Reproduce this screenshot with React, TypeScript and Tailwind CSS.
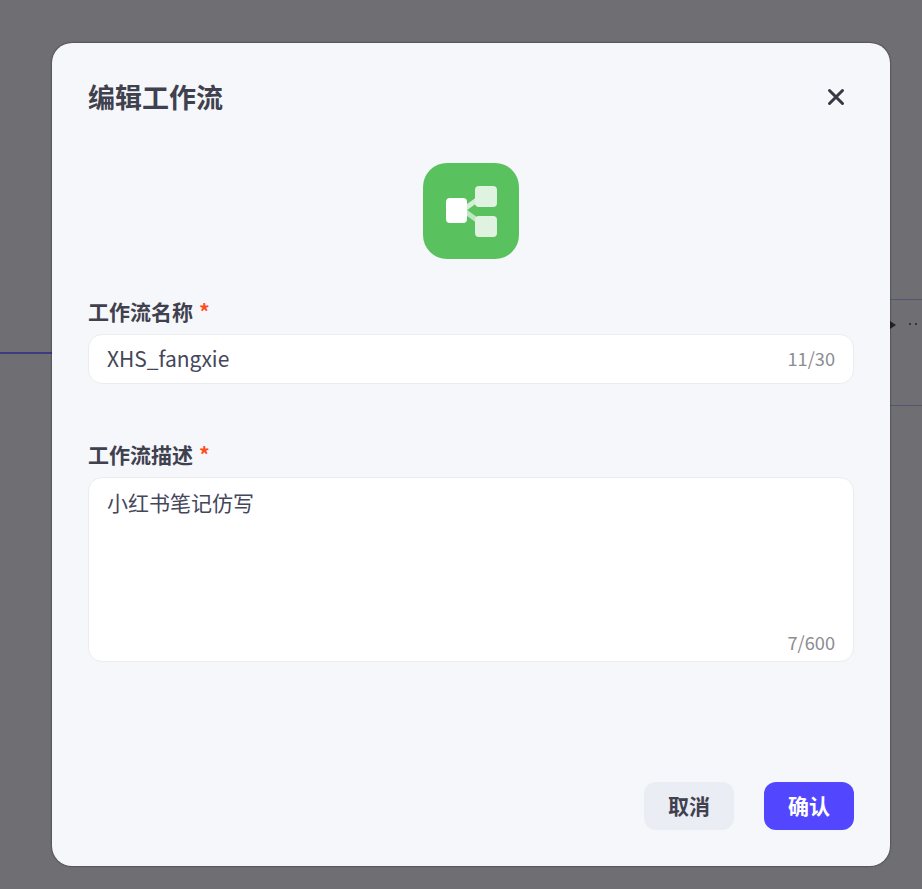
const fontStack = { fontFamily: '"Noto Sans CJK SC", "Noto Sans", sans-serif' };

function WorkflowIcon() {
  return (
    <div className="flex h-24 w-24 items-center justify-center rounded-[24px] bg-[#5ac15f]">
      <svg width="52" height="52" viewBox="0 0 52 52" fill="none">
        <path d="M18 25 L36 12" stroke="#e0f3e1" strokeOpacity="0.9" strokeWidth="5" />
        <path d="M18 25 L36 38" stroke="#bfe6c1" strokeWidth="5" />
        <rect x="30" y="1" width="22" height="21" rx="4" fill="#e0f3e1" />
        <rect x="30" y="31" width="22" height="21" rx="4" fill="#e0f3e1" />
        <rect x="1" y="13" width="21" height="25" rx="4" fill="#ffffff" />
      </svg>
    </div>
  );
}

function FieldLabel({ text }: { text: string }) {
  return (
    <div className="flex h-7 items-center gap-[6px] text-[21px] leading-7 font-semibold text-[#3f414e]">
      <span>{text}</span>
      <span className="text-[#ff4d1f]">*</span>
    </div>
  );
}

export default function App() {
  return (
    <div className="relative h-[889px] w-[922px] overflow-hidden bg-[#6e6e73]" style={fontStack}>
      {/* canvas behind the dialog */}
      <div className="absolute top-[352px] left-0 h-[2px] w-[60px] bg-[#3b3b80]" />
      <div className="absolute top-[299px] left-[880px] h-[107px] w-[60px] border border-[#55556f]" />
      <div className="absolute top-[321px] left-[890px] h-0 w-0 border-y-[4px] border-l-[6px] border-y-transparent border-l-[#222228]" />
      <div className="absolute top-[323px] left-[909px] flex gap-[4px]">
        <span className="h-[2px] w-[2px] rounded-full bg-[#222228]" />
        <span className="h-[2px] w-[2px] rounded-full bg-[#222228]" />
      </div>

      <div className="absolute top-[43px] left-[52px] flex h-[823px] w-[838px] flex-col rounded-[20px] bg-[#f6f7fb] px-9 shadow-[0_0_2px_rgba(0,0,0,0.7)]">
        <div className="flex h-[110px] items-center justify-between pb-[2px]">
          <h2 className="text-[27px] leading-9 font-semibold text-[#3f414e]">编辑工作流</h2>
          <button type="button" className="mr-[6px] flex h-6 w-6 items-center justify-center text-[#363844]">
            <svg width="24" height="24" viewBox="0 0 24 24" fill="none" stroke="currentColor" strokeWidth="3" strokeLinecap="round">
              <path d="M5.5 5.5 L18.5 18.5 M18.5 5.5 L5.5 18.5" />
            </svg>
          </button>
        </div>

        <div className="flex justify-center pt-[10px]">
          <WorkflowIcon />
        </div>

        <div className="mt-[38px]">
          <FieldLabel text="工作流名称" />
          <div className="mt-[9px] flex h-[50px] items-center justify-between rounded-[14px] border border-[#ebecf0] bg-white px-[18px]">
            <span className="text-[21px] text-[#44465a]">XHS_fangxie</span>
            <span className="text-[18.2px] text-[#8c8c92]">11/30</span>
          </div>
        </div>

        <div className="mt-[56px]">
          <FieldLabel text="工作流描述" />
          <div className="mt-[9px] flex h-[185px] flex-col justify-between rounded-[14px] border border-[#ebecf0] bg-white px-[18px] pt-[8px] pb-[5px]">
            <span className="text-[21px] leading-[32px] text-[#44465a]">小红书笔记仿写</span>
            <span className="self-end text-[18.2px] leading-[28px] text-[#8c8c92]">7/600</span>
          </div>
        </div>

        <div className="mt-auto mb-[36px] flex justify-end gap-[30px]">
          <button type="button" className="h-12 w-[90px] rounded-xl bg-[#eaedf4] text-[21px] font-semibold text-[#3f414e]">
            取消
          </button>
          <button type="button" className="h-12 w-[90px] rounded-xl bg-[#5247ff] text-[21px] font-bold text-white">
            确认
          </button>
        </div>
      </div>
    </div>
  );
}
